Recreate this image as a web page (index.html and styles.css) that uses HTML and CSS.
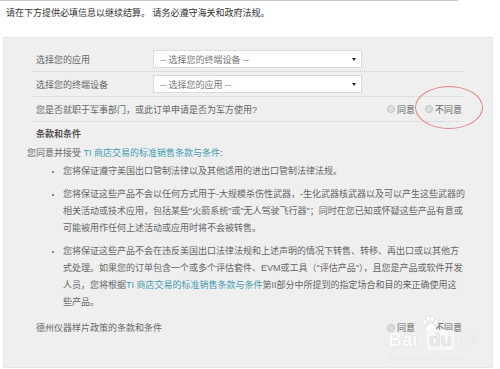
FILE: index.html
```html
<!DOCTYPE html>
<html lang="zh-CN">
<head>
    <meta charset="UTF-8">
    <title>结算 - 出口合规</title>
    <link rel="stylesheet" href="styles.css">
</head>
<body>
    <p class="notice">请在下方提供必填信息以继续结算。 请务必遵守海关和政府法规。</p>

    <div class="panel">
        <div class="form">
            <div class="row">
                <span class="label">选择您的应用</span>
                <div class="select">-- 选择您的终端设备 --<span class="caret"></span></div>
            </div>
            <div class="row">
                <span class="label">选择您的终端设备</span>
                <div class="select">-- 选择您的应用 --<span class="caret"></span></div>
            </div>
            <div class="row">
                <span class="question">您是否就职于军事部门，或此订单申请是否为军方使用?</span>
                <div class="choices">
                    <label><span class="radio"></span>同意</label>
                    <label class="marked"><span class="radio"></span>不同意</label>
                </div>
            </div>
        </div>

        <h3 class="terms-title">条款和条件</h3>
        <p class="intro">您同意并接受 <a href="#">TI 商店交易的标准销售条款与条件</a>:</p>

        <ul class="terms">
            <li>您将保证遵守美国出口管制法律以及其他适用的进出口管制法律法规。</li>
            <li>您将保证这些产品不会以任何方式用于-大规模杀伤性武器，-生化武器核武器以及可以产生这些武器的相关活动或技术应用，包括某些"火箭系统"或"无人驾驶飞行器"；同时在您已知或怀疑这些产品有意或可能被用作任何上述活动或应用时将不会被转售。</li>
            <li>您将保证这些产品不会在违反美国出口法律法规和上述声明的情况下转售、转移、再出口或以其他方式处理。如果您的订单包含一个或多个评估套件、EVM或工具（"评估产品"），且您是产品或软件开发人员，您将根据<a href="#">TI 商店交易的标准销售条款与条件</a>第II部分中所提到的指定场合和目的来正确使用这些产品。</li>
        </ul>

        <div class="footer-row">
            <span>德州仪器样片政策的条款和条件</span>
            <div class="choices">
                <label><span class="radio"></span>同意</label>
                <label><span class="radio"></span>不同意</label>
            </div>
        </div>

        <!-- watermark from the source screenshot -->
        <div class="watermark">
            <span class="wm-bai">Bai</span>
            <svg class="wm-paw" width="18" height="16" viewBox="0 0 18 16">
                <ellipse cx="4" cy="6" rx="2" ry="2.6" fill="#fff" stroke="#ddd" stroke-width="0.6"/>
                <ellipse cx="7.5" cy="2.8" rx="2" ry="2.6" fill="#fff" stroke="#ddd" stroke-width="0.6"/>
                <ellipse cx="11.5" cy="2.8" rx="2" ry="2.6" fill="#fff" stroke="#ddd" stroke-width="0.6"/>
                <ellipse cx="15" cy="6" rx="2" ry="2.6" fill="#fff" stroke="#ddd" stroke-width="0.6"/>
                <path d="M9.5 7.5c-3 0-5.5 3.6-5.5 5.8 0 1.6 1.4 2.2 3 2.2h5c1.6 0 3-.6 3-2.2 0-2.2-2.5-5.8-5.5-5.8z" fill="#fff" stroke="#ddd" stroke-width="0.6"/>
            </svg>
            <span class="wm-du">du</span>
            <span class="wm-jy">经验</span>
            <span class="wm-url">jingyan.baidu.com</span>
        </div>
    </div>
</body>
</html>
```

FILE: styles.css
```css
body {
    margin: 0;
    font-family: "Liberation Sans", "Noto Sans CJK SC", sans-serif;
    font-size: 9px;
    color: #666;
    background: #fff;
}
.notice {
    margin: 0;
    width: 452px;
    height: 31px;
    padding: 5px 0 0 6px;
    border-top: 1px solid #c8c8c8;
    line-height: 14px;
    color: #333;
}
.panel {
    position: relative;
    margin-left: 3px;
    width: 490px;
    height: 331px;
    box-sizing: border-box;
    padding-top: 9px;
    background: #efefef;
    border: 1px solid #e6e6e6;
}
.form {
    margin-left: 28px;
    width: 431px;
}
.row {
    display: flex;
    align-items: center;
    height: 24px;
    padding-left: 4px;
    border-bottom: 1px dotted #cfcfcf;
}
.label {
    width: 117px;
}
.select {
    position: relative;
    width: 209px;
    height: 18px;
    box-sizing: border-box;
    padding-left: 6px;
    display: flex;
    align-items: center;
    background: #fff;
    border: 1px solid #dcdcdc;
    color: #777;
}
.caret {
    position: absolute;
    right: 5px;
    top: 7px;
    border-left: 2px solid transparent;
    border-right: 2px solid transparent;
    border-top: 3px solid #222;
}
.question {
    flex: 1;
}
.choices {
    display: flex;
    gap: 10px;
    padding-right: 1px;
}
.choices label {
    display: flex;
    align-items: center;
    gap: 2px;
}
.radio {
    width: 6px;
    height: 6px;
    border-radius: 50%;
    border: 1px solid #c4c4c4;
    background: #dedede;
}
.marked {
    position: relative;
}
.marked::after {
    content: "";
    position: absolute;
    left: -10px;
    top: -17px;
    width: 66px;
    height: 41px;
    border: 1px solid #e08585;
    border-radius: 50%;
}
.terms-title {
    margin: 5px 0 0 32px;
    font-size: 9px;
    line-height: 14px;
    font-weight: bold;
    color: #555;
}
.intro {
    margin: 5px 0 0 23px;
    line-height: 14px;
}
a {
    color: #3f9db0;
    text-decoration: none;
}
.terms {
    margin: 3px 0 0;
    padding: 0 0 0 59px;
    width: 402px;
    line-height: 17px;
}
.terms li {
    margin-bottom: 6px;
}
.terms li::marker {
    font-size: 8px;
}
.footer-row {
    display: flex;
    align-items: center;
    justify-content: space-between;
    margin: 8px 0 0 32px;
    width: 427px;
    height: 17px;
}
.watermark {
    position: absolute;
    left: 380px;
    top: 278px;
    width: 100px;
    height: 48px;
}
.wm-bai,
.wm-du,
.wm-jy {
    position: absolute;
    top: 14px;
    font-size: 19px;
    font-weight: bold;
    line-height: 20px;
    color: #fbfbfb;
    text-shadow: 0 0 1px #c8c8c8;
}
.wm-bai {
    left: 4px;
}
.wm-paw {
    position: absolute;
    left: 37px;
    top: 0;
}
.wm-du {
    left: 43px;
    padding: 0 2px;
    border-radius: 4px;
    background: #f8f8f8;
    color: #e8e8e8;
}
.wm-jy {
    left: 72px;
    font-size: 11px;
    font-weight: normal;
}
.wm-url {
    position: absolute;
    left: 6px;
    top: 37px;
    font-size: 8px;
    color: #f8f8f8;
    text-shadow: 0 0 1px #d0d0d0;
    letter-spacing: 0.5px;
}
```
